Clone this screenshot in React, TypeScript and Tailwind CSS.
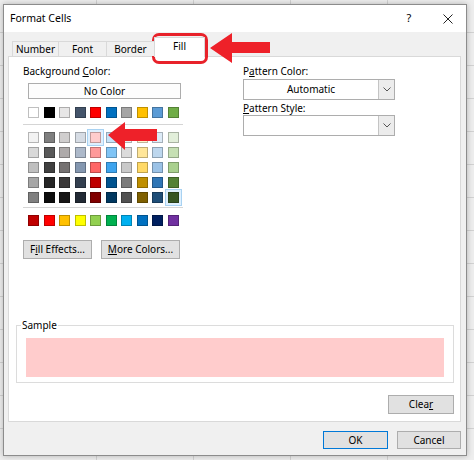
import React from "react";

const FONT = "font-['Segoe_UI','Noto_Sans',sans-serif]";

const theme = ["#FFFFFF", "#000000", "#E7E6E6", "#44546A", "#FF0000", "#0070C0", "#A5A5A5", "#FFC000", "#5B9BD5", "#70AD47"];
const shades: string[][] = [
  ["#F2F2F2", "#7F7F7F", "#D0CECE", "#D6DCE4", "#FFCCCC", "#C5E3F8", "#EDEDED", "#FFF2CC", "#DDEBF7", "#E2EFDA"],
  ["#D9D9D9", "#595959", "#AEAAAA", "#ADB9CA", "#FF9999", "#7FC4F5", "#DBDBDB", "#FFE699", "#BDD7EE", "#C6E0B4"],
  ["#BFBFBF", "#404040", "#757171", "#8497B0", "#FF6666", "#3EA4EE", "#C9C9C9", "#FFD966", "#9BC2E6", "#A9D08E"],
  ["#A6A6A6", "#262626", "#3A3838", "#333F4F", "#BF0000", "#00538F", "#7B7B7B", "#BF8F00", "#2F75B5", "#548235"],
  ["#808080", "#0D0D0D", "#171616", "#222A35", "#800000", "#003860", "#525252", "#7F6000", "#1F4E78", "#375623"],
];
const standard = ["#C00000", "#FF0000", "#FFC000", "#FFFF00", "#92D050", "#00B050", "#00B0F0", "#0070C0", "#002060", "#7030A0"];

function Swatch({ color, selected }: { color: string; selected?: boolean }) {
  return (
    <div
      className={
        selected
          ? "h-[11px] w-[11px] border border-black/25 shadow-[0_0_0_2px_#dff0fe,0_0_0_3px_#a8d2f2]"
          : "h-[11px] w-[11px] border border-black/25"
      }
      style={{ backgroundColor: color }}
    />
  );
}

function Chevron() {
  return (
    <svg width="8" height="5" viewBox="0 0 8 5">
      <polyline points="0.5,0.5 4,4 7.5,0.5" fill="none" stroke="#555" strokeWidth="1" />
    </svg>
  );
}

function Dropdown({ text }: { text?: string }) {
  return (
    <div className="flex h-[21px] w-[152px] border border-[#adadad] bg-white">
      <div className="flex flex-1 items-center justify-center text-[10px] text-black">{text}</div>
      <div className="flex w-[16px] items-center justify-center border-l border-[#c4c4c4] bg-[#ececec]">
        <Chevron />
      </div>
    </div>
  );
}

function Btn({ children, w, primary }: { children: React.ReactNode; w: string; primary?: boolean }) {
  return (
    <div
      className={
        (primary ? "border-[#0078d7] " : "border-[#adadad] ") +
        "flex h-full items-center justify-center border bg-[#e1e1e1] text-[10px] text-black " +
        w
      }
    >
      {children}
    </div>
  );
}

export default function App() {
  return (
    <div
      className={
        "relative h-[460px] w-[474px] overflow-hidden bg-[#eeeeee] pl-[3px] pt-[4px] bg-[image:repeating-linear-gradient(90deg,transparent_0px,transparent_96px,#d2d2d2_96px,#d2d2d2_97px),repeating-linear-gradient(180deg,transparent_0px,transparent_32px,#d2d2d2_32px,#d2d2d2_33px)] " +
        FONT
      }
    >
      <div className="flex h-[452px] w-[464px] flex-col border border-[#8c8c8c] bg-[#f0f0f0] shadow-[0_0_6px_rgba(0,0,0,0.25)]">
        {/* Title bar */}
        <div className="flex h-[27px] items-center bg-white pl-[6px] pr-[8px]">
          <span className="text-[10.5px] text-black">Format Cells</span>
          <div className="ml-auto flex w-[20px] justify-center text-[11px] text-black">?</div>
          <div className="ml-[19px] flex w-[20px] justify-center">
            <svg width="10" height="10" viewBox="0 0 10 10">
              <line x1="0.5" y1="0.5" x2="9.5" y2="9.5" stroke="#222" strokeWidth="1" />
              <line x1="9.5" y1="0.5" x2="0.5" y2="9.5" stroke="#222" strokeWidth="1" />
            </svg>
          </div>
        </div>

        {/* Body */}
        <div className="flex flex-1 flex-col pl-[4px] pr-[5px] pt-[5px]">
          {/* Tabs */}
          <div className="relative z-10 flex h-[19px] items-end pl-[4px] text-[10px] text-black">
            <div className="flex h-[15px] w-[47px] items-center justify-center border border-b-0 border-[#d9d9d9] bg-[#f0f0f0]">Number</div>
            <div className="-ml-px flex h-[15px] w-[49px] items-center justify-center border border-b-0 border-[#d9d9d9] bg-[#f0f0f0]">Font</div>
            <div className="-ml-px flex h-[15px] w-[49px] items-center justify-center border border-b-0 border-[#d9d9d9] bg-[#f0f0f0]">Border</div>
            <div className="-mb-px -ml-px flex h-[20px] w-[51px] items-center justify-center border border-b-0 border-[#d9d9d9] bg-white pb-[2px]">Fill</div>
          </div>

          {/* Panel */}
          <div className="flex h-[366px] flex-col border border-[#d9d9d9] bg-white text-[10px] text-black">
            <div className="flex pl-[14px] pt-[7px]">
              {/* Left column */}
              <div className="flex w-[160px] flex-col">
                <div className="h-[14px] leading-[14px]">
                  Background <span className="underline">C</span>olor:
                </div>
                <div className="ml-[5px] mt-[5px] flex h-[16px] w-[153px] items-center justify-center border border-[#adadad] bg-[#fdfdfd]">
                  No Color
                </div>
                <div className="ml-[5px] mt-[8px] grid grid-cols-[repeat(10,11px)] gap-x-[4.5px]">
                  {theme.map((c, i) => (
                    <Swatch key={i} color={c} />
                  ))}
                </div>
                <div className="mt-[6px] h-px w-[160px] bg-[#d5d5d5]" />
                <div className="ml-[5px] mt-[7px] grid grid-cols-[repeat(10,11px)] gap-x-[4.5px] gap-y-[4px]">
                  {shades.map((row, r) =>
                    row.map((c, i) => (
                      <Swatch key={r + "-" + i} color={c} selected={(r === 0 && i === 4) || (r === 4 && i === 9)} />
                    ))
                  )}
                </div>
                <div className="mt-[4px] h-px w-[160px] bg-[#d5d5d5]" />
                <div className="ml-[5px] mt-[7px] grid grid-cols-[repeat(10,11px)] gap-x-[4.5px]">
                  {standard.map((c, i) => (
                    <Swatch key={i} color={c} />
                  ))}
                </div>
                <div className="mt-[14px] flex h-[19px] gap-[9px]">
                  <Btn w="w-[69px]">
                    <span>
                      F<span className="underline">i</span>ll Effects...
                    </span>
                  </Btn>
                  <Btn w="w-[79px]">
                    <span>
                      <span className="underline">M</span>ore Colors...
                    </span>
                  </Btn>
                </div>
              </div>

              {/* Right column */}
              <div className="ml-[60px] flex w-[152px] flex-col">
                <div className="h-[14px] leading-[14px]">
                  P<span className="underline">a</span>ttern Color:
                </div>
                <div className="mt-[1px]">
                  <Dropdown text="Automatic" />
                </div>
                <div className="mt-[1px] h-[14px] leading-[14px]">
                  <span className="underline">P</span>attern Style:
                </div>
                <Dropdown />
              </div>
            </div>

            {/* Sample */}
            <fieldset className="ml-[7px] mr-[6px] mt-[59px] border border-[#dcdcdc]">
              <legend className="ml-[4px] px-[1px] text-[10px] leading-[14px]">Sample</legend>
              <div className="mx-[9px] mb-[5px] mt-[6px] h-[39px] bg-[#FFCCCC]" />
            </fieldset>

            <div className="mr-[6px] mt-[12px] flex h-[19px] justify-end">
              <Btn w="w-[66px]">
                <span>
                  Clea<span className="underline">r</span>
                </span>
              </Btn>
            </div>
          </div>

          {/* Footer */}
          <div className="flex h-[27px] justify-end gap-[9px] pt-[9px]">
            <Btn w="w-[65px]" primary>
              OK
            </Btn>
            <Btn w="w-[64px]">Cancel</Btn>
          </div>
        </div>
      </div>

      {/* Red annotation overlays */}
      <div className="absolute left-[152px] top-[33px] h-[31px] w-[56px] rounded-[7px] border-[3px] border-[#e8222a]" />
      <svg className="absolute left-[209px] top-[32px]" width="62" height="32" viewBox="0 0 62 32">
        <polygon points="1,16 23,1 23,10 61,10 61,21 23,21 23,31" fill="#ee2129" />
      </svg>
      <svg className="absolute left-[107px] top-[121px]" width="51" height="30" viewBox="0 0 51 30">
        <polygon points="1,14 18,1 18,8 50,8 50,20 18,20 18,29" fill="#ee2129" />
      </svg>
    </div>
  );
}
